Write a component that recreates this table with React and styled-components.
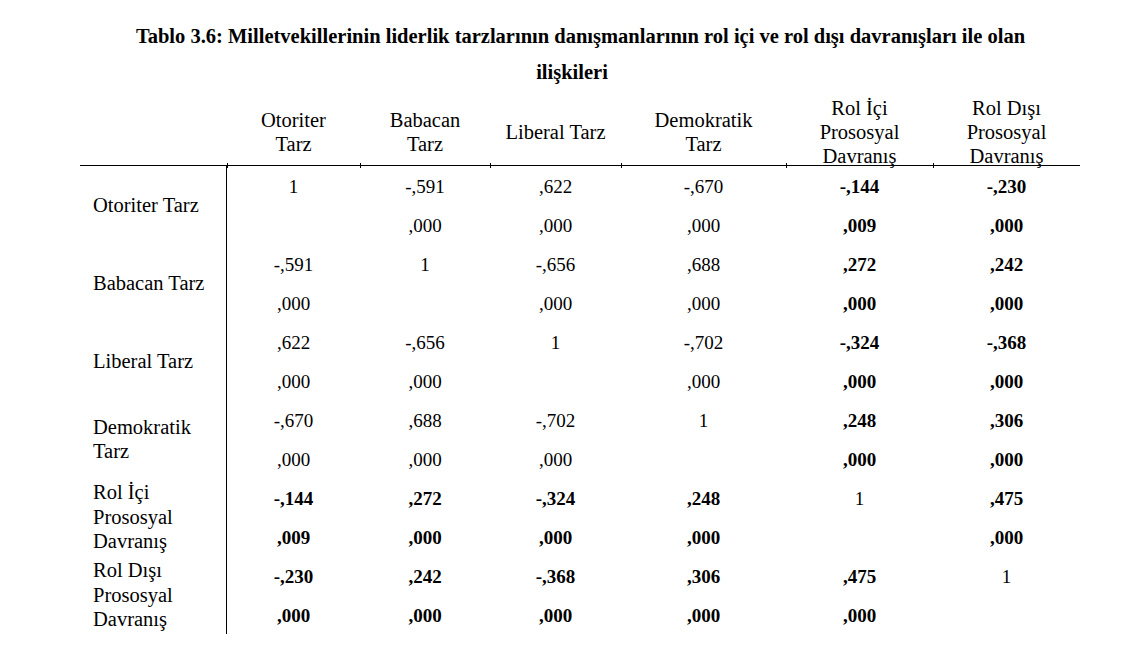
import React from "react";
import styled, { createGlobalStyle } from "styled-components";

const Global = createGlobalStyle`
  html, body { margin: 0; padding: 0; background: #fff; }
  body { font-family: "Liberation Serif", "Times New Roman", serif; color: #000; }
`;

const Page = styled.div`
  width: 1125px;
  height: 658px;
  background: #fff;
  padding-top: 18px;
  box-sizing: border-box;
`;

const TitleLine = styled.div`
  font-weight: bold;
  font-size: 20.5px;
  line-height: 36px;
  text-align: center;
  width: 1125px;
  padding-left: ${(p) => p.$shift || 0}px;
  box-sizing: border-box;
  white-space: nowrap;
`;

const COLS = "147px 133px 130px 131px 165px 147px 147px";

const Table = styled.div`
  margin-left: 80px;
  margin-top: 3px;
  width: 1000px;
  font-size: 20.5px;
`;

const HeadRow = styled.div`
  display: grid;
  grid-template-columns: ${COLS};
  border-bottom: 1px solid #000;
`;

const HeadCell = styled.div`
  position: relative;
  height: 72px;
  padding-top: 5px;
  box-sizing: border-box;
  display: flex;
  align-items: center;
  justify-content: center;
  text-align: center;
  line-height: 24px;
  ${(p) =>
    p.$tick &&
    `&::after {
      content: "";
      position: absolute;
      left: 0;
      bottom: -3px;
      width: 1px;
      height: 5px;
      background: #000;
    }`}
`;

const Group = styled.div`
  display: grid;
  grid-template-columns: ${COLS};
  grid-template-rows: 39px 39px;
`;

const Label = styled.div`
  grid-column: 1;
  grid-row: 1 / 3;
  display: flex;
  align-items: center;
  padding-left: 13px;
  line-height: 24.5px;
  border-right: 1px solid #000;
  box-sizing: border-box;
`;

const Cell = styled.div`
  height: 39px;
  line-height: 39px;
  padding-top: 1px;
  box-sizing: border-box;
  text-align: center;
  font-size: 19px;
  font-weight: ${(p) => (p.$bold ? "bold" : "normal")};
`;

const headers = [
  ["Otoriter", "Tarz"],
  ["Babacan", "Tarz"],
  ["Liberal Tarz"],
  ["Demokratik", "Tarz"],
  ["Rol İçi", "Prososyal", "Davranış"],
  ["Rol Dışı", "Prososyal", "Davranış"],
];

const rows = [
  {
    label: ["Otoriter Tarz"],
    r: ["1", "-,591", ",622", "-,670", "-,144", "-,230"],
    p: ["", ",000", ",000", ",000", ",009", ",000"],
    bold: [0, 0, 0, 0, 1, 1],
  },
  {
    label: ["Babacan Tarz"],
    r: ["-,591", "1", "-,656", ",688", ",272", ",242"],
    p: [",000", "", ",000", ",000", ",000", ",000"],
    bold: [0, 0, 0, 0, 1, 1],
  },
  {
    label: ["Liberal Tarz"],
    r: [",622", "-,656", "1", "-,702", "-,324", "-,368"],
    p: [",000", ",000", "", ",000", ",000", ",000"],
    bold: [0, 0, 0, 0, 1, 1],
  },
  {
    label: ["Demokratik", "Tarz"],
    r: ["-,670", ",688", "-,702", "1", ",248", ",306"],
    p: [",000", ",000", ",000", "", ",000", ",000"],
    bold: [0, 0, 0, 0, 1, 1],
  },
  {
    label: ["Rol İçi", "Prososyal", "Davranış"],
    r: ["-,144", ",272", "-,324", ",248", "1", ",475"],
    p: [",009", ",000", ",000", ",000", "", ",000"],
    bold: [1, 1, 1, 1, 0, 1],
  },
  {
    label: ["Rol Dışı", "Prososyal", "Davranış"],
    r: ["-,230", ",242", "-,368", ",306", ",475", "1"],
    p: [",000", ",000", ",000", ",000", ",000", ""],
    bold: [1, 1, 1, 1, 1, 0],
  },
];

const Lines = ({ parts }) =>
  parts.map((t, i) => (
    <React.Fragment key={i}>
      {i > 0 && <br />}
      {t}
    </React.Fragment>
  ));

export default function App() {
  return (
    <Page>
      <Global />
      <TitleLine $shift={36}>
        Tablo 3.6: Milletvekillerinin liderlik tarzlarının danışmanlarının rol içi ve rol dışı davranışları ile olan
      </TitleLine>
      <TitleLine $shift={19}>ilişkileri</TitleLine>
      <Table>
        <HeadRow>
          <HeadCell />
          {headers.map((h, i) => (
            <HeadCell key={i} $tick>
              <div>
                <Lines parts={h} />
              </div>
            </HeadCell>
          ))}
        </HeadRow>
        {rows.map((row, ri) => (
          <Group key={ri}>
            <Label>
              <div>
                <Lines parts={row.label} />
              </div>
            </Label>
            {row.r.map((v, ci) => (
              <Cell key={"r" + ci} $bold={row.bold[ci] && v !== "1"}>
                {v}
              </Cell>
            ))}
            {row.p.map((v, ci) => (
              <Cell key={"p" + ci} $bold={row.bold[ci]}>
                {v}
              </Cell>
            ))}
          </Group>
        ))}
      </Table>
    </Page>
  );
}
